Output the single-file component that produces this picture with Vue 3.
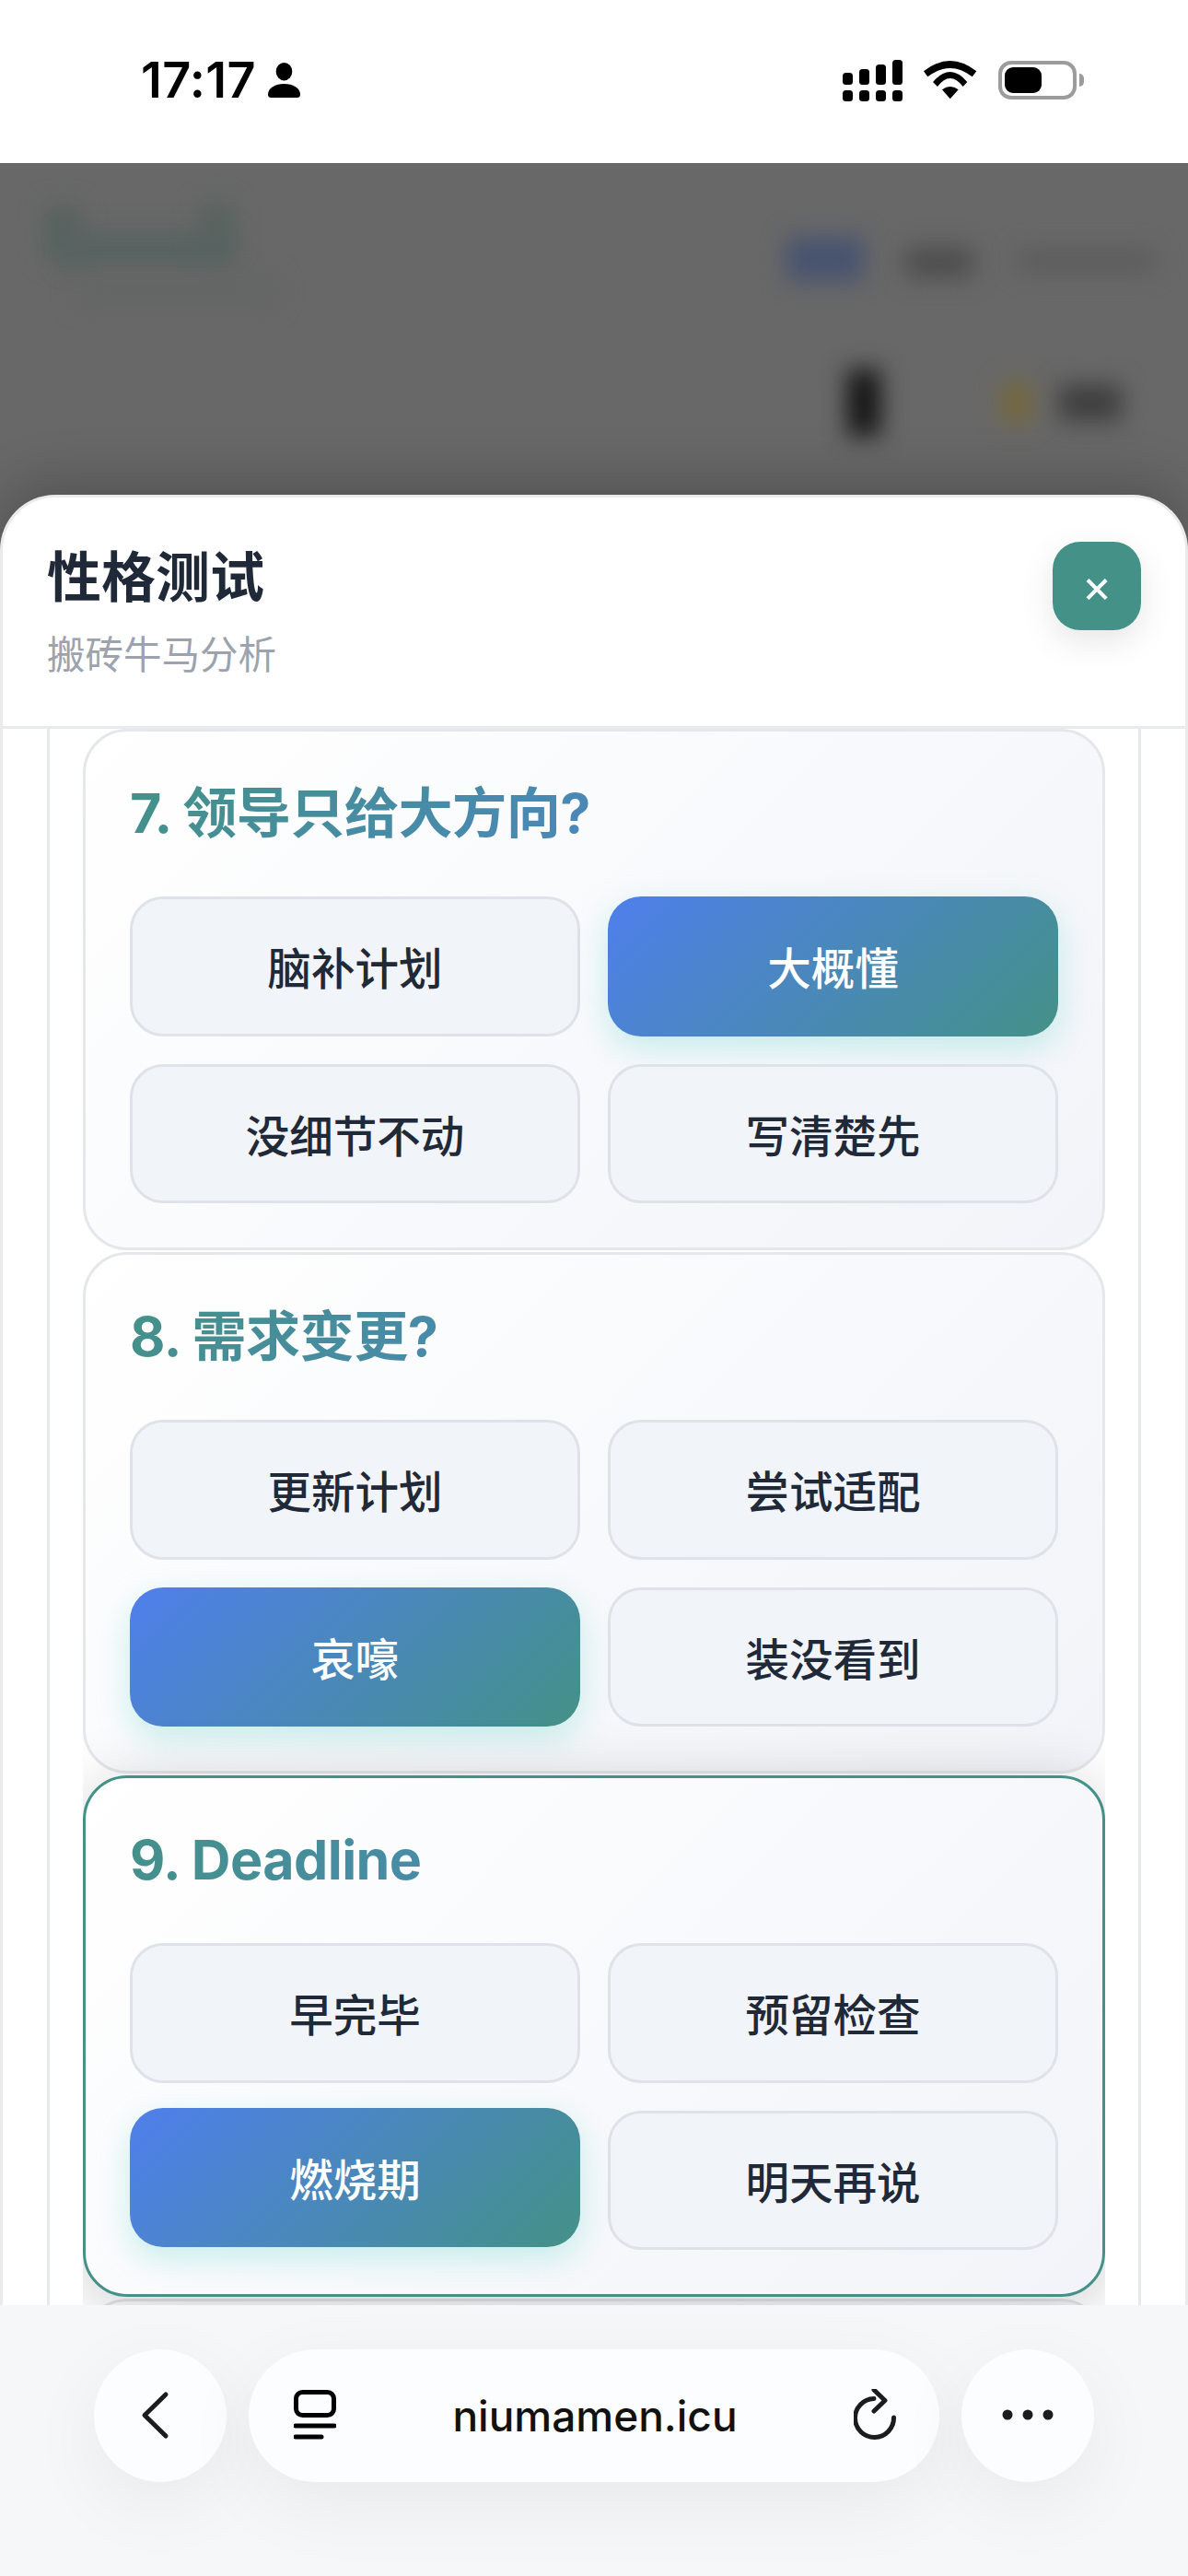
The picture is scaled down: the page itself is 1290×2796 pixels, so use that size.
<template>
  <div class="screen">
    <!-- status bar -->
    <div class="status-bar">
      <div class="status-left">
        <span class="clock">17:17</span>
        <svg width="35" height="38" viewBox="0 0 35 38">
          <ellipse cx="17.5" cy="9.7" rx="8.8" ry="9.7" />
          <path d="M0 34.5C0 27.5 8 23 17.5 23S35 27.5 35 34.5Q35 38 31.5 38H3.5Q0 38 0 34.5Z" />
        </svg>
      </div>
      <div class="status-right">
        <svg width="65" height="45" viewBox="0 0 65 45">
          <rect x="0" y="14" width="11" height="13" rx="3.5" />
          <rect x="18" y="10" width="11" height="17" rx="3.5" />
          <rect x="36" y="5" width="11" height="22" rx="3.5" />
          <rect x="54" y="0" width="11" height="27" rx="3.5" />
          <rect x="0" y="33" width="11" height="12" rx="3.5" />
          <rect x="18" y="33" width="11" height="12" rx="3.5" />
          <rect x="36" y="33" width="11" height="12" rx="3.5" />
          <rect x="54" y="33" width="11" height="12" rx="3.5" />
        </svg>
        <svg class="wifi" width="58" height="42" viewBox="0 0 58 42">
          <path d="M0 11.3Q28.7 -11.3 57.3 11.3L52.7 17.3Q28.7 -1.3 4.3 17.3Z" />
          <path d="M10 23Q28.7 1 47.3 23L42.7 28Q28.7 10 15 28Z" />
          <path d="M20 31.3Q28.7 24.7 37.7 31.3L28.7 41.3Z" />
        </svg>
        <div class="battery">
          <div class="battery-level"></div>
        </div>
        <div class="battery-tip"></div>
      </div>
    </div>

    <div class="page">
      <!-- blurred page behind the sheet -->
      <div class="page-blur">
        <div class="blob logo-a"></div>
        <div class="blob logo-b"></div>
        <div class="blob logo-c"></div>
        <div class="blob logo-sub"></div>
        <div class="blob tab-active"></div>
        <div class="blob tab-dark"></div>
        <div class="blob tab-rest"></div>
        <div class="blob phone"></div>
        <div class="blob coin"></div>
        <div class="blob coin-label"></div>
      </div>

      <div class="sheet">
        <div class="sheet-header">
          <div>
            <div class="sheet-title">性格测试</div>
            <div class="sheet-sub">搬砖牛马分析</div>
          </div>
          <button class="close-btn" type="button">×</button>
        </div>

        <div class="sheet-body">
          <div class="frame">
            <div class="cards">
              <div
                v-for="q in questions"
                :key="q.title"
                class="card"
                :class="{ active: q.active }"
              >
                <div class="card-title">{{ q.title }}</div>
                <div class="options">
                  <button
                    v-for="opt in q.options"
                    :key="opt"
                    type="button"
                    class="option"
                    :class="{ selected: opt === q.picked }"
                  >{{ opt }}</button>
                </div>
              </div>
              <div class="card card-next"></div>
            </div>
          </div>
        </div>
      </div>
    </div>

    <!-- browser toolbar -->
    <div class="toolbar">
      <div class="round-btn">
        <svg width="144" height="144" viewBox="0 0 144 144">
          <path class="ico" d="M78 49L55 71.500L78 94" />
        </svg>
      </div>
      <div class="url-pill">
        <svg width="46" height="56" viewBox="0 0 46 56">
          <rect class="ico ico-black" x="2.500" y="2.500" width="41" height="25" rx="7" />
          <path class="ico ico-black" d="M2 39H44M2 51H30" />
        </svg>
        <span class="url">niumamen.icu</span>
        <svg width="50" height="58" viewBox="0 0 50 58">
          <path class="ico" d="M43.500 31A21 21 0 1 1 22 10.500" />
          <path class="ico" d="M22 1L34 12.500L22 24" />
        </svg>
      </div>
      <div class="round-btn">
        <svg width="144" height="144" viewBox="0 0 144 144">
          <circle class="dot" cx="50" cy="71" r="5.500" />
          <circle class="dot" cx="72" cy="71" r="5.500" />
          <circle class="dot" cx="94" cy="71" r="5.500" />
        </svg>
      </div>
    </div>
  </div>
</template>

<script setup>
const questions = [
  { title: '7. 领导只给大方向?', options: ['脑补计划', '大概懂', '没细节不动', '写清楚先'], picked: '大概懂' },
  { title: '8. 需求变更?', options: ['更新计划', '尝试适配', '哀嚎', '装没看到'], picked: '哀嚎' },
  { title: '9. Deadline', options: ['早完毕', '预留检查', '燃烧期', '明天再说'], picked: '燃烧期', active: true }
]
</script>

<style>
html, body {
  background: #fff;
}
</style>

<style scoped>
.screen {
  width: 1290px;
  height: 2796px;
  display: flex;
  flex-direction: column;
  overflow: hidden;
  background: #fff;
  font-family: Inter, "Noto Sans CJK SC", sans-serif;
}

/* status bar */
.status-bar {
  height: 177px;
  flex-shrink: 0;
  box-sizing: border-box;
  padding: 0 113px 3px 153px;
  display: flex;
  align-items: center;
  justify-content: space-between;
  background: #fff;
}
.status-left,
.status-right {
  display: flex;
  align-items: center;
}
.status-left {
  gap: 13px;
}
.clock {
  font-size: 54px;
  line-height: 60px;
  font-weight: 600;
  color: #000;
  letter-spacing: 0.3px;
}
.wifi {
  margin-left: 23px;
}
.battery {
  margin-left: 23px;
  width: 85px;
  height: 42px;
  box-sizing: border-box;
  border: 4px solid #9c9c9c;
  border-radius: 14px;
  padding: 3px;
}
.battery-level {
  width: 40px;
  height: 100%;
  background: #000;
  border-radius: 9px;
}
.battery-tip {
  width: 5px;
  height: 14px;
  margin-left: 3px;
  background: #9c9c9c;
  border-radius: 0 5px 5px 0;
}

/* backdrop */
.page {
  flex: 1;
  position: relative;
  overflow: hidden;
  background: #686868;
}
.page-blur {
  position: absolute;
  inset: 0;
}
.blob {
  position: absolute;
  filter: blur(13px);
}
.logo-a {
  left: 50px;
  top: 46px;
  width: 36px;
  height: 60px;
  background: #56635f;
}
.logo-b {
  left: 70px;
  top: 76px;
  width: 180px;
  height: 34px;
  background: #566361;
}
.logo-c {
  left: 218px;
  top: 44px;
  width: 34px;
  height: 54px;
  background: #56635f;
}
.logo-sub {
  left: 85px;
  top: 125px;
  width: 215px;
  height: 28px;
  background: #646565;
}
.tab-active {
  left: 854px;
  top: 80px;
  width: 84px;
  height: 48px;
  background: #47536f;
}
.tab-dark {
  left: 984px;
  top: 92px;
  width: 72px;
  height: 32px;
  background: #4c4c4c;
}
.tab-rest {
  left: 1104px;
  top: 95px;
  width: 150px;
  height: 22px;
  background: #5b5b5b;
}
.phone {
  left: 920px;
  top: 224px;
  width: 36px;
  height: 72px;
  background: #141414;
}
.coin {
  left: 1088px;
  top: 238px;
  width: 32px;
  height: 44px;
  background: #76683a;
}
.coin-label {
  left: 1150px;
  top: 240px;
  width: 68px;
  height: 40px;
  background: #3e3e3e;
}

/* sheet */
.sheet {
  position: absolute;
  left: 0;
  right: 0;
  top: 360px;
  bottom: 0;
  display: flex;
  flex-direction: column;
  overflow: hidden;
  box-sizing: border-box;
  background: #fff;
  border: 3px solid #ebebeb;
  border-bottom: none;
  border-radius: 60px 60px 0 0;
  box-shadow: 0 -12px 60px rgba(0, 0, 0, 0.22);
}
.sheet-header {
  flex-shrink: 0;
  display: flex;
  justify-content: space-between;
  align-items: flex-start;
  padding: 48px 48px 48px;
  border-bottom: 3px solid #e9eaec;
}
.sheet-title {
  font-size: 59px;
  line-height: 78px;
  font-weight: 700;
  color: #1f2937;
}
.sheet-sub {
  margin-top: 16px;
  font-size: 41.500px;
  line-height: 58px;
  color: #9ca3af;
}
.close-btn {
  width: 96px;
  height: 96px;
  padding: 0;
  border: none;
  border-radius: 30px;
  background: #449187;
  color: #fff;
  font-family: inherit;
  font-size: 50px;
  line-height: 96px;
  box-shadow: 0 12px 36px rgba(0, 0, 0, 0.1);
}
.sheet-body {
  flex: 1;
  min-height: 0;
  padding: 0 48px;
}
.frame {
  height: 100%;
  box-sizing: border-box;
  padding: 0 36px;
  border-left: 3px solid #e8e9eb;
  border-right: 3px solid #e8e9eb;
}
.cards {
  height: 100%;
  display: flex;
  flex-direction: column;
  gap: 2px;
  overflow: hidden;
}
.card {
  flex-shrink: 0;
  box-sizing: border-box;
  position: relative;
  padding: 48px;
  border: 3px solid #e5e7eb;
  border-radius: 48px;
  background: linear-gradient(135deg, #ffffff, #f2f4f9);
}
.card.active {
  z-index: 1;
  border-color: #449187;
  box-shadow: 0 12px 72px rgba(0, 0, 0, 0.2);
}
.card-next {
  height: 566px;
}
.card-title {
  font-size: 59.200px;
  line-height: 82px;
  font-weight: 700;
  letter-spacing: -0.6px;
  margin-bottom: 49px;
  background: linear-gradient(135deg, #449187, #4f7fe8);
  -webkit-background-clip: text;
  background-clip: text;
  color: transparent;
}
.options {
  display: grid;
  grid-template-columns: 1fr 1fr;
  gap: 30px;
}
.option {
  height: 151.500px;
  padding: 0;
  box-sizing: border-box;
  border: 3px solid #dfe2e8;
  border-radius: 36px;
  background: #f1f4f9;
  color: #1f2937;
  font-family: inherit;
  font-size: 47.500px;
  font-weight: 500;
}
.option.selected {
  border-color: transparent;
  background: linear-gradient(135deg, #4f7fec, #449187) border-box;
  color: #fff;
  font-weight: 500;
  box-shadow: 0 12px 36px rgba(78, 205, 196, 0.3);
}
.card.active .option.selected {
  transform: translateY(-3px);
}

/* toolbar */
.toolbar {
  height: 294px;
  flex-shrink: 0;
  box-sizing: border-box;
  position: relative;
  padding: 48px 102px 0 102px;
  display: flex;
  align-items: flex-start;
  gap: 24px;
  background: #f6f7f9;
}
.round-btn,
.url-pill {
  height: 144px;
  flex-shrink: 0;
  background: #fcfdfe;
  box-shadow: 0 24px 84px rgba(0, 0, 0, 0.06);
}
.round-btn {
  width: 144px;
  border-radius: 50%;
}
.round-btn svg {
  display: block;
}
.url-pill {
  flex: 1;
  min-width: 0;
  box-sizing: border-box;
  padding: 0 43px 0 49px;
  border-radius: 72px;
  display: flex;
  align-items: center;
}
.url {
  flex: 1;
  text-align: center;
  font-size: 46px;
  font-weight: 500;
  color: #111;
}
.ico {
  fill: none;
  stroke: #1c1c1e;
  stroke-width: 5;
  stroke-linecap: round;
  stroke-linejoin: round;
}
.ico-black {
  stroke: #000;
}
.dot {
  fill: #1c1c1e;
}
</style>
